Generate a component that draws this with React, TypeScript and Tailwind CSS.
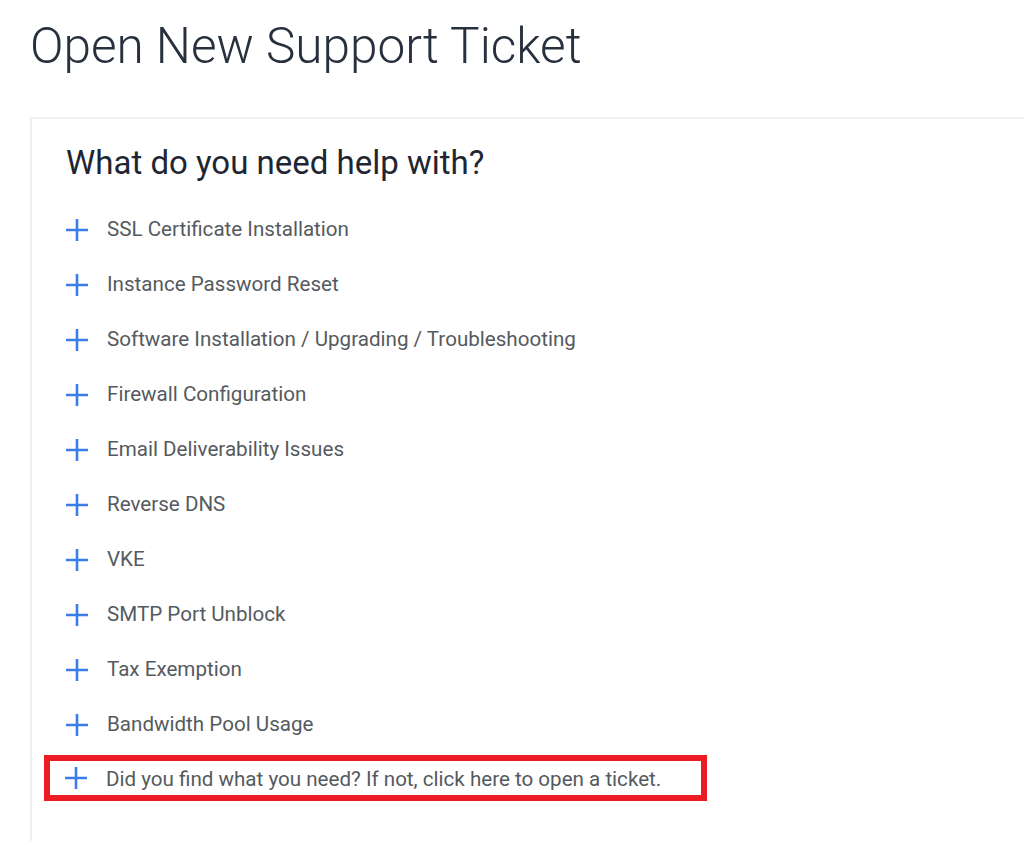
import React from "react";

const topics = [
  "SSL Certificate Installation",
  "Instance Password Reset",
  "Software Installation / Upgrading / Troubleshooting",
  "Firewall Configuration",
  "Email Deliverability Issues",
  "Reverse DNS",
  "VKE",
  "SMTP Port Unblock",
  "Tax Exemption",
  "Bandwidth Pool Usage",
];

const PlusIcon: React.FC = () => (
  <svg width="22" height="22" viewBox="0 0 22 22" className="shrink-0">
    <path d="M11 0V22M0 11H22" stroke="#3a7de8" strokeWidth="2.6" />
  </svg>
);

const TopicRow: React.FC<{ label: string }> = ({ label }) => (
  <div className="flex items-center h-[55px] gap-[19px]">
    <PlusIcon />
    <span className="text-[20.6px] text-[#555a60]">{label}</span>
  </div>
);

export default function App() {
  return (
    <div
      className="bg-white min-h-[841px] pl-[30px] pt-[14px] overflow-hidden"
      style={{ fontFamily: "Roboto, 'Open Sans', sans-serif" }}
    >
      <h1 className="text-[49.5px] font-light text-[#27303d] leading-[64px]">
        Open New Support Ticket
      </h1>
      <div className="mt-[39px] border-l-2 border-t-2 border-[#efefef] pl-[34px] pt-[22px] h-[730px]">
        <h2 className="text-[33px] text-[#1f2633] leading-[44px]">
          What do you need help with?
        </h2>
        <div className="mt-[17px]">
          {topics.map((t) => (
            <TopicRow key={t} label={t} />
          ))}
          <div className="mt-[3px] -ml-[22px] w-[663px] border-[6px] border-[#ed1c24] pl-[15px] h-[46px] flex items-center gap-[19px]">
            <PlusIcon />
            <span className="text-[20.6px] text-[#555a60] pt-[2px]">
              Did you find what you need? If not, click here to open a ticket.
            </span>
          </div>
        </div>
      </div>
    </div>
  );
}
